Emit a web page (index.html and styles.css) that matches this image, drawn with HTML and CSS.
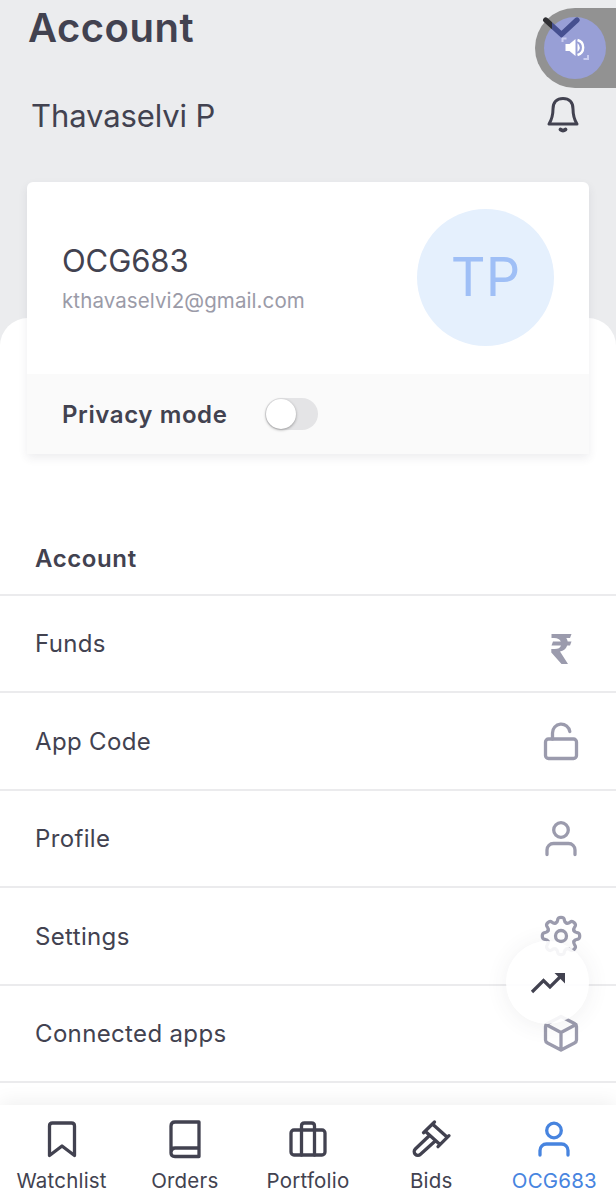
FILE: index.html
```
<!DOCTYPE html>
<html lang="en">
  <head>
    <meta charset="UTF-8" />
    <meta name="viewport" content="width=device-width" />
    <title>Account</title>
    <link rel="stylesheet" href="styles.css">
  </head>

  <body>
    <header class="hero">
      <h1 class="title">Account</h1>
      <div class="user">
        <span class="user-name">Thavaselvi P</span>
        <svg class="bell" width="34" height="38" viewBox="0 0 34 38">
          <path d="M3 28H31C28.500 24 27 20 27 13C27 6 23 2.500 17 2.500S7 6 7 13C7 20 5.500 24 3 28Z" />
          <path d="M14.500 33.500Q17 35.500 19.500 33.500" stroke-width="3.800" />
        </svg>
      </div>
      <section class="card">
        <div class="card-top">
          <div class="client">
            <div class="client-id">OCG683</div>
            <div class="email">kthavaselvi2@gmail.com</div>
          </div>
          <div class="avatar">TP</div>
        </div>
        <div class="card-bottom">
          <span class="privacy">Privacy mode</span>
          <span class="toggle"></span>
        </div>
      </section>
    </header>

    <main class="sheet">
      <h2 class="section-title">Account</h2>
      <ul class="list">
        <li class="row">
          <span>Funds</span>
          <svg class="icon rupee" width="42" height="42" viewBox="0 0 42 42">
            <path d="M11.500 11H31.500L30 15H26.300Q27.400 16.500 27.700 18.500H31.500L30 22.500H27.200Q25.500 27.500 20 28.500L28 41H21.500L11.300 29.500V26H14.500Q20 26 21 22.500H11.500L13 18.500H20.800Q19.500 15 14 15H11.500Z" />
          </svg>
        </li>
        <li class="row">
          <span>App Code</span>
          <svg class="icon" width="42" height="42" viewBox="0 0 42 42">
            <rect x="5.500" y="19" width="31" height="19.500" rx="3" />
            <path d="M12.500 19V13A8.700 8.700 0 0 1 29.800 11.500" />
          </svg>
        </li>
        <li class="row">
          <span>Profile</span>
          <svg class="icon" width="42" height="42" viewBox="0 0 42 42">
            <circle cx="21" cy="12" r="7.300" />
            <path d="M7 36.500V32A6.500 6.500 0 0 1 13.500 25.500H28.500A6.500 6.500 0 0 1 35 32V36.500" />
          </svg>
        </li>
        <li class="row">
          <span>Settings</span>
          <svg class="icon" width="42" height="42" viewBox="0 0 42 42">
            <circle cx="21" cy="21" r="5.500" />
            <path id="tooth" d="M15.640 8.070C19.500 6.500 15.500 2.300 21 2.300C26.500 2.300 22.500 6.500 26.360 8.070" />
            <use href="#tooth" transform="rotate(45 21 21)" />
            <use href="#tooth" transform="rotate(90 21 21)" />
            <use href="#tooth" transform="rotate(135 21 21)" />
            <use href="#tooth" transform="rotate(180 21 21)" />
            <use href="#tooth" transform="rotate(225 21 21)" />
            <use href="#tooth" transform="rotate(270 21 21)" />
            <use href="#tooth" transform="rotate(315 21 21)" />
          </svg>
        </li>
        <li class="row">
          <span>Connected apps</span>
          <svg class="icon" width="42" height="42" viewBox="0 0 42 42">
            <path d="M21 4.500L34.500 11.500Q36.500 12.500 36.500 14.500V28Q36.500 30 34.500 31L21 38L7.500 31Q5.500 30 5.500 28V14.500Q5.500 12.500 7.500 11.500ZM6 12.500L21 20.500L36 12.500M21 20.500V37.500" />
          </svg>
        </li>
      </ul>
    </main>

    <div class="fab">
      <svg width="36" height="22" viewBox="0 0 36 22">
        <path class="trend" d="M2 20L13.500 8.500L20 15L31 4" />
        <path class="trend-head" d="M24.500 1H35V11.500Z" />
      </svg>
    </div>

    <nav class="tabs">
      <a class="tab">
        <svg width="42" height="42" viewBox="0 0 42 42">
          <path d="M8.500 37.500V8Q8.500 5 11.500 5H30.500Q33.500 5 33.500 8V37.500L21 28Z" />
        </svg>
        Watchlist
      </a>
      <a class="tab">
        <svg width="42" height="42" viewBox="0 0 42 42">
          <path d="M35 4H11Q7 4 7 8V35Q7 38.500 11 38.500H35ZM7 34Q7.500 30 11 30H35" />
        </svg>
        Orders
      </a>
      <a class="tab">
        <svg width="42" height="42" viewBox="0 0 42 42">
          <rect x="4" y="12" width="34" height="25" rx="3" />
          <path d="M14.500 37V8Q14.500 5 17.500 5H24.500Q27.500 5 27.500 8V37" />
        </svg>
        Portfolio
      </a>
      <a class="tab">
        <svg width="42" height="42" viewBox="0 0 42 42">
          <path d="M24.500 4L13.500 14.700M39 17.700L28 28.700M23 6.500L37 19M15.500 13.500L30 26.500M19.500 17.500L5.300 31A3.700 3.700 0 0 0 10.500 36.300L25.500 22.700" />
        </svg>
        Bids
      </a>
      <a class="tab tab-active">
        <svg width="42" height="42" viewBox="0 0 42 42">
          <circle cx="21" cy="12.500" r="7.300" />
          <path d="M7 37V32.500A6.500 6.500 0 0 1 13.500 26H28.500A6.500 6.500 0 0 1 35 32.500V37" />
        </svg>
        OCG683
      </a>
    </nav>

    <!-- floating sound control, over the collapse chevron -->
    <div class="sound">
      <svg width="81" height="80" viewBox="0 0 81 80">
        <defs>
          <linearGradient id="chevron" gradientUnits="userSpaceOnUse" x1="0" y1="0" x2="81" y2="0">
            <stop offset="0.210" stop-color="#303033" />
            <stop offset="0.210" stop-color="#465090" />
          </linearGradient>
        </defs>
        <circle cx="40" cy="40" r="31" fill="#989fd6" />
        <path d="M10.700 12L26.500 26.500L42 12" fill="none" stroke="url(#chevron)" stroke-width="5.300" stroke-linecap="round" />
        <path d="M27.500 34V30.500H31.500M53 47V51H48.500" fill="none" stroke="#c9cdf0" stroke-width="2" />
        <path d="M30.500 36H34.500L40.500 31V48L34.500 43H30.500Z" fill="#fff" />
        <path d="M42.500 35Q47 39.500 42.500 44Z" fill="#fff" />
        <path d="M42.500 32A7.800 7.800 0 0 1 42.500 47" fill="none" stroke="#fff" stroke-width="2.400" />
      </svg>
    </div>
  </body>
</html>
```
FILE: styles.css
```
* {
  box-sizing: border-box;
}
body {
  position: relative;
  height: 1200px;
  margin: 0;
  overflow: hidden;
  background-color: #fff;
  color: #424250;
  font-family: Inter, "Liberation Sans", sans-serif;
}
svg {
  flex: none;
}
.hero {
  height: 346px;
  padding: 4px 27px 0;
  background-color: #ebecee;
}
.title {
  margin: 0 0 0 1px;
  font-size: 40px;
  font-weight: 600;
  letter-spacing: 0.500px;
  line-height: 48px;
}
.user {
  display: flex;
  justify-content: space-between;
  align-items: center;
  height: 40px;
  margin: 43px 9px 0 4px;
}
.user-name {
  font-size: 31px;
  letter-spacing: -0.100px;
}
.bell {
  fill: none;
  stroke: #424250;
  stroke-width: 3;
  stroke-linecap: round;
  stroke-linejoin: round;
}
.card {
  position: relative;
  height: 272px;
  margin-top: 47px;
  border-radius: 6px 6px 2px 2px;
  background-color: #fff;
  box-shadow: 0 4px 10px rgba(60, 60, 80, 0.09);
}
.card-top {
  display: flex;
  justify-content: space-between;
  align-items: center;
  height: 192px;
  padding: 0 35px 1px;
}
.client-id {
  font-size: 31px;
  letter-spacing: -0.100px;
  line-height: 38px;
}
.email {
  margin-top: 8px;
  color: #9b9ba8;
  font-size: 20.500px;
  letter-spacing: 0.100px;
  line-height: 26px;
}
.avatar {
  width: 137px;
  height: 137px;
  border-radius: 50%;
  background-color: #e5f0fd;
  color: #9fbff6;
  font-size: 54px;
  line-height: 135px;
  text-align: center;
}
.card-bottom {
  display: flex;
  align-items: center;
  height: 80px;
  padding: 0 35px;
  border-radius: 0 0 2px 2px;
  background-color: #fafafa;
}
.privacy {
  width: 203px;
  font-size: 24px;
  font-weight: 600;
  letter-spacing: 0.600px;
}
.toggle {
  width: 53px;
  height: 32px;
  padding: 1px;
  border-radius: 16px;
  background-color: #e4e4e6;
}
.toggle::before {
  content: "";
  display: block;
  width: 30px;
  height: 30px;
  border-radius: 50%;
  background-color: #fff;
  box-shadow: 0 1px 3px rgba(0, 0, 0, 0.35);
}
.sheet {
  height: 882px;
  margin-top: -28px;
  padding-top: 203px;
  border-radius: 28px 28px 0 0;
  background-color: #fff;
}
.section-title {
  height: 75px;
  margin: 0;
  padding-left: 35px;
  border-bottom: 2px solid #ebebed;
  font-size: 24px;
  font-weight: 600;
  letter-spacing: 0.600px;
  line-height: 75px;
}
.list {
  margin: 0;
  padding: 0;
  list-style: none;
}
.row {
  display: flex;
  justify-content: space-between;
  align-items: center;
  height: 97.450px;
  padding: 0 34px 0 35px;
  border-bottom: 2px solid #ebebed;
  font-size: 24px;
  letter-spacing: 0.350px;
}
.icon {
  fill: none;
  stroke: #9b9bad;
  stroke-width: 3.300;
  stroke-linecap: round;
  stroke-linejoin: round;
}
.rupee {
  fill: #9b9bad;
  stroke: none;
}
.fab {
  position: absolute;
  top: 941px;
  left: 506px;
  display: flex;
  justify-content: center;
  align-items: center;
  width: 83px;
  height: 83px;
  border-radius: 50%;
  background-color: rgba(255, 255, 255, 0.900);
  box-shadow: 0 2px 22px rgba(60, 60, 80, 0.08);
}
.trend {
  fill: none;
  stroke: #424250;
  stroke-width: 3.200;
}
.trend-head {
  fill: #424250;
}
.tabs {
  position: absolute;
  right: 0;
  bottom: 0;
  left: 0;
  display: grid;
  grid-template-columns: repeat(5, 1fr);
  height: 95px;
  background-color: #fff;
  box-shadow: 0 -4px 18px rgba(0, 0, 0, 0.06);
}
.tab {
  display: flex;
  flex-direction: column;
  align-items: center;
  gap: 7px;
  padding-top: 13px;
  font-size: 20.500px;
  letter-spacing: 0.200px;
  line-height: 27px;
}
.tab svg {
  fill: none;
  stroke: #424250;
  stroke-width: 3.300;
  stroke-linecap: round;
  stroke-linejoin: round;
}
.tab-active {
  color: #4784df;
}
.tab-active svg {
  stroke: #4784df;
}
.sound {
  position: absolute;
  top: 8px;
  right: 0;
  width: 81px;
  height: 80px;
  border-radius: 40px 0 0 40px;
  background-color: #929292;
}
```
